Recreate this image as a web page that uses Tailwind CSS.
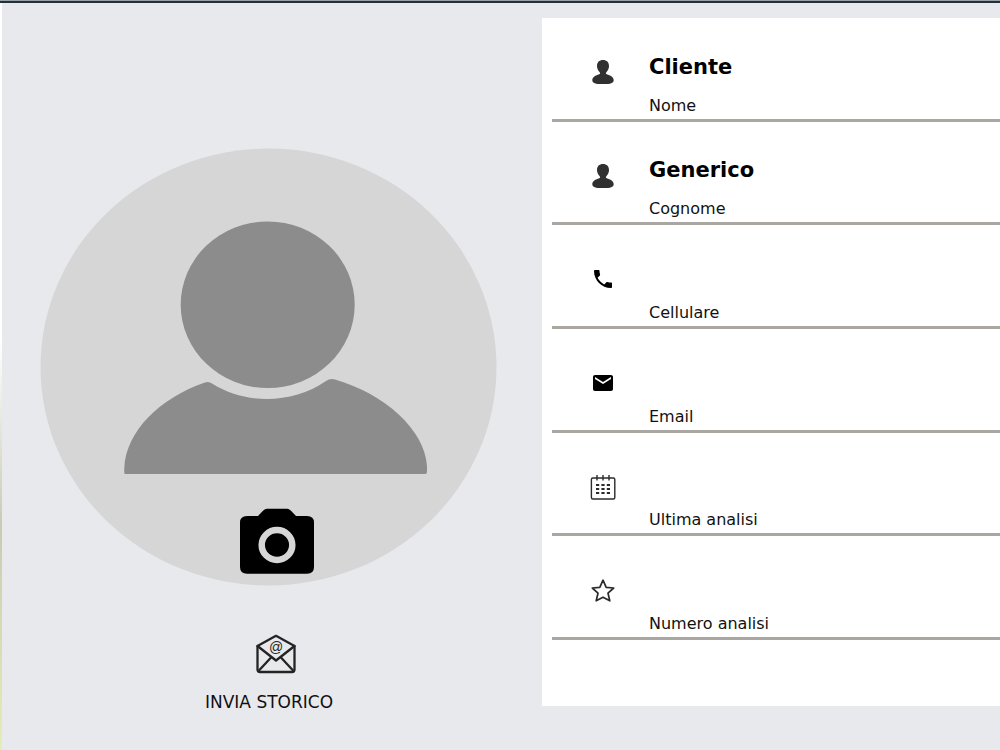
<!DOCTYPE html>
<html lang="it">
<head>
<meta charset="utf-8">
<meta name="viewport" content="width=device-width, initial-scale=1">
<title>Scheda cliente</title>
<script src="https://cdn.jsdelivr.net/npm/@tailwindcss/browser@4"></script>
</head>
<body class="min-h-screen flex flex-col bg-[#e8e9ed] text-[#111] font-['Verdana','DejaVu_Sans',sans-serif]">
<div class="h-[3px] border-t border-[#9aa1a4] bg-[#223138]"></div>
<div class="flex flex-1">
  <div class="w-[2px] bg-linear-to-b from-white from-45% via-[#c9cbb4] via-70% to-[#e6edb5]"></div>

  <main class="flex flex-1">
    <section class="w-[540px] shrink-0 flex flex-col items-center pt-[145px] pr-[6px]">
      <div class="relative">
        <svg class="block w-[458px] h-[438px]" viewBox="40 148 458 438" role="img" aria-label="Foto del cliente">
          <ellipse cx="268.500" cy="367" rx="228" ry="218.500" fill="#d6d6d6"/>
          <ellipse cx="267.700" cy="304.700" rx="87" ry="83.300" fill="#8c8c8c"/>
          <path fill="#8c8c8c" d="M125 474Q124 474 124.300 468C126 431 160 398 205 382.500Q209 381 212 383.500C245 404.500 292 404.500 326 381Q330 378 335 379.500C385 394 425 430 427 466V472Q427 474 425 474Z"/>
        </svg>
        <button type="button" aria-label="Scatta foto" class="absolute left-[200px] top-[360px] cursor-pointer">
          <svg class="block w-[74px] h-[66px]" viewBox="0 0 74 66">
            <path d="M27 .700H47Q49 .700 51 2.700L56 8H67Q74 8 74 14.500V59Q74 65.700 67 65.700H7Q0 65.700 0 59V14.500Q0 8 7 8H18L23 2.700Q25 .700 27 .700Z"/>
            <ellipse cx="37" cy="37" rx="15.300" ry="14.900" fill="none" stroke="#d6d6d6" stroke-width="6.500"/>
          </svg>
        </button>
      </div>
      <button type="button" class="mt-[48px] flex flex-col items-center text-[17px] leading-6 cursor-pointer">
        <svg class="w-[40px] h-[40px] ml-[14px]" viewBox="0 0 40 40" fill="none" stroke="#242424" stroke-width="2.300" stroke-linejoin="round" stroke-linecap="round">
          <path d="M1.500 12 20 1.800 38.500 12V35.500Q38.500 38 36 38H4Q1.500 38 1.500 35.500Z"/>
          <path d="M1.500 12 20 26.500 38.500 12M2.500 37 15.500 23M37.500 37 24.500 23"/>
          <text x="20" y="18" text-anchor="middle" font-family="Liberation Sans, sans-serif" font-size="14" fill="#242424" stroke="none">@</text>
        </svg>
        <span class="mt-4">INVIA STORICO</span>
      </button>
    </section>

    <form class="flex-1 min-w-0 self-start mt-[15px] bg-white pl-[10px] pb-[66px]">
      <div class="grid grid-rows-6 h-[622px]">
        <div class="flex min-h-0 border-b-[3px] border-[#aaa7a2]">
          <div class="w-[97px] shrink-0 pt-[42px] pl-[39px]">
            <svg class="w-6 h-6 block" viewBox="0 0 24 24" fill="#303030"><path d="M12 0C8.300 0 6 2.200 6 6C6 8.500 7 10.200 8.500 12C9.500 13.300 9.300 14 7.500 14.600C4 15.600 1.300 17.500 1.300 20.500C1.300 23.300 6 24.400 12 24.400S22.700 23.300 22.700 20.500C22.700 17.500 20 15.600 16.500 14.600C14.700 14 14.500 13.300 15.500 12C17 10.200 18 8.500 18 6C18 2.200 15.700 0 12 0Z"/></svg>
          </div>
          <div class="flex-1 min-w-0 flex flex-col justify-end pb-px">
            <input id="nome" value="Cliente" class="w-full h-[32px] mb-[11px] text-[21px] font-bold text-black outline-none">
            <label for="nome" class="text-[16px] leading-6">Nome</label>
          </div>
        </div>
        <div class="flex min-h-0 border-b-[3px] border-[#aaa7a2]">
          <div class="w-[97px] shrink-0 pt-[42px] pl-[39px]">
            <svg class="w-6 h-6 block" viewBox="0 0 24 24" fill="#303030"><path d="M12 0C8.300 0 6 2.200 6 6C6 8.500 7 10.200 8.500 12C9.500 13.300 9.300 14 7.500 14.600C4 15.600 1.300 17.500 1.300 20.500C1.300 23.300 6 24.400 12 24.400S22.700 23.300 22.700 20.500C22.700 17.500 20 15.600 16.500 14.600C14.700 14 14.500 13.300 15.500 12C17 10.200 18 8.500 18 6C18 2.200 15.700 0 12 0Z"/></svg>
          </div>
          <div class="flex-1 min-w-0 flex flex-col justify-end pb-px">
            <input id="cognome" value="Generico" class="w-full h-[32px] mb-[11px] text-[21px] font-bold text-black outline-none">
            <label for="cognome" class="text-[16px] leading-6">Cognome</label>
          </div>
        </div>
        <div class="flex min-h-0 border-b-[3px] border-[#aaa7a2]">
          <div class="w-[97px] shrink-0 pt-[42px] pl-[39px]">
            <svg class="w-6 h-6 block" viewBox="0 0 24 24"><path d="M6.600 10.800c1.400 2.800 3.800 5.100 6.600 6.600l2.200-2.200c.3-.3.700-.4 1-.2 1.100.4 2.300.6 3.600.6.600 0 1 .4 1 1V20c0 .6-.4 1-1 1C10.600 21 3 13.400 3 4c0-.6.500-1 1-1h3.500c.6 0 1 .4 1 1 0 1.200.2 2.400.6 3.600.1.400 0 .7-.2 1z"/></svg>
          </div>
          <div class="flex-1 min-w-0 flex flex-col justify-end pb-px">
            <input id="cellulare" type="tel" class="w-full h-[32px] mb-[11px] text-[21px] font-bold text-black outline-none">
            <label for="cellulare" class="text-[16px] leading-6">Cellulare</label>
          </div>
        </div>
        <div class="flex min-h-0 border-b-[3px] border-[#aaa7a2]">
          <div class="w-[97px] shrink-0 pt-[42px] pl-[39px]">
            <svg class="w-6 h-6 block" viewBox="0 0 24 24"><path d="M20 4H4c-1.100 0-2 .9-2 2v12c0 1.100.9 2 2 2h16c1.100 0 2-.9 2-2V6c0-1.100-.9-2-2-2zm0 4-8 5-8-5V6l8 5 8-5z"/></svg>
          </div>
          <div class="flex-1 min-w-0 flex flex-col justify-end pb-px">
            <input id="email" type="email" class="w-full h-[32px] mb-[11px] text-[21px] font-bold text-black outline-none">
            <label for="email" class="text-[16px] leading-6">Email</label>
          </div>
        </div>
        <div class="flex min-h-0 border-b-[3px] border-[#aaa7a2]">
          <div class="w-[97px] shrink-0 pt-[42px] pl-[39px]">
            <svg class="w-6 h-6 block overflow-visible" viewBox="0 0 24 24" fill="none" stroke="#2b2b2b" stroke-width="1.400">
              <rect x=".4" y="3" width="23.400" height="21" rx="1.500"/>
              <path d="M6 0V5.500M12 0V5.500M18 0V5.500"/>
              <path d="M5 10H19M5 14H19M5 18H19" stroke-width="2.200" stroke-dasharray="3.200 2.200"/>
            </svg>
          </div>
          <div class="flex-1 min-w-0 flex flex-col justify-end pb-px">
            <input id="ultima" class="w-full h-[32px] mb-[11px] text-[21px] font-bold text-black outline-none">
            <label for="ultima" class="text-[16px] leading-6">Ultima analisi</label>
          </div>
        </div>
        <div class="flex min-h-0 border-b-[3px] border-[#aaa7a2]">
          <div class="w-[97px] shrink-0 pt-[42px] pl-[39px]">
            <svg class="w-6 h-6 block overflow-visible" viewBox="0 0 24 24" fill="none" stroke="#2b2b2b" stroke-width="1.700" stroke-linejoin="round"><path d="M12 2.200 15.200 9.300 22.700 10 17 15.200 18.800 22.800 12 19.200 5.200 22.800 7 15.200 1.300 10 8.800 9.300Z"/></svg>
          </div>
          <div class="flex-1 min-w-0 flex flex-col justify-end pb-px">
            <input id="numero" class="w-full h-[32px] mb-[11px] text-[21px] font-bold text-black outline-none">
            <label for="numero" class="text-[16px] leading-6">Numero analisi</label>
          </div>
        </div>
      </div>
    </form>
  </main>
</div>
</body>
</html>
